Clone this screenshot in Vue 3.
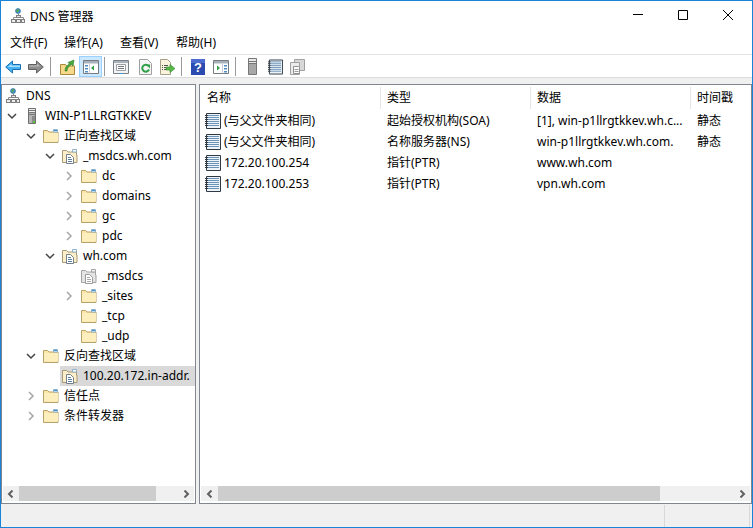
<script setup>
const menus = ['文件(F)', '操作(A)', '查看(V)', '帮助(H)']

const tree = [
  { label: 'DNS', level: 0, icon: 'dns', arrow: '' },
  { label: 'WIN-P1LLRGTKKEV', level: 1, icon: 'server', arrow: 'open' },
  { label: '正向查找区域', level: 2, icon: 'folder', arrow: 'open' },
  { label: '_msdcs.wh.com', level: 3, icon: 'zone', arrow: 'open' },
  { label: 'dc', level: 4, icon: 'folder', arrow: 'closed' },
  { label: 'domains', level: 4, icon: 'folder', arrow: 'closed' },
  { label: 'gc', level: 4, icon: 'folder', arrow: 'closed' },
  { label: 'pdc', level: 4, icon: 'folder', arrow: 'closed' },
  { label: 'wh.com', level: 3, icon: 'zone', arrow: 'open' },
  { label: '_msdcs', level: 4, icon: 'zonegray', arrow: '' },
  { label: '_sites', level: 4, icon: 'folder', arrow: 'closed' },
  { label: '_tcp', level: 4, icon: 'folder', arrow: '' },
  { label: '_udp', level: 4, icon: 'folder', arrow: '' },
  { label: '反向查找区域', level: 2, icon: 'folder', arrow: 'open' },
  { label: '100.20.172.in-addr.', level: 3, icon: 'zone', arrow: '', selected: true },
  { label: '信任点', level: 2, icon: 'folder', arrow: 'closed' },
  { label: '条件转发器', level: 2, icon: 'folder', arrow: 'closed' }
]

const columns = [
  { label: '名称', cls: 'c1' },
  { label: '类型', cls: 'c2' },
  { label: '数据', cls: 'c3' },
  { label: '时间戳', cls: 'c4' }
]

const rows = [
  { name: '(与父文件夹相同)', type: '起始授权机构(SOA)', data: '[1], win-p1llrgtkkev.wh.c...', time: '静态' },
  { name: '(与父文件夹相同)', type: '名称服务器(NS)', data: 'win-p1llrgtkkev.wh.com.', time: '静态' },
  { name: '172.20.100.254', type: '指针(PTR)', data: 'www.wh.com', time: '' },
  { name: '172.20.100.253', type: '指针(PTR)', data: 'vpn.wh.com', time: '' }
]
</script>

<template>
  <div class="window">
    <svg class="defs" width="0" height="0" aria-hidden="true">
      <symbol id="dns" viewBox="0 0 16 16">
        <circle cx="8" cy="3" r="2.500" fill="#3f8fce" stroke="#2c6a9c" stroke-width=".6" />
        <path d="M6.500 2l2-1 1 1.500-1.500 1-.5 1.500-1-1.500z" fill="#58a84a" />
        <path d="M8.500 6v3M3.500 11.500V9.500h10v2" fill="none" stroke="#8a8a8a" />
        <rect x="6.500" y="7.500" width="4" height="2" fill="#e4e4e4" stroke="#808080" />
        <rect x="1.500" y="11.500" width="4" height="3" fill="#ececec" stroke="#808080" />
        <rect x="6.500" y="11.500" width="4" height="3" fill="#ececec" stroke="#808080" />
        <rect x="11.500" y="11.500" width="3" height="3" fill="#ececec" stroke="#808080" />
      </symbol>
      <symbol id="server" viewBox="0 0 16 16">
        <path d="M4.500.5h7v15h-7z" fill="#b4b4b4" stroke="#6f6f6f" />
        <path d="M5 1h6v4H5z" fill="#f0f0f0" />
        <path d="M5 2.500h6M5 4.500h6M5 6.500h6" stroke="#777" />
        <path d="M8 8h3v7H8z" fill="#8b8b8b" />
        <rect x="9" y="13" width="2" height="2" fill="#5fc23c" />
      </symbol>
      <symbol id="folder" viewBox="0 0 16 16">
        <path d="M.5 14.500V2.500h4l1.500 1.500h9v10.500z" fill="#fbe5a8" stroke="#b7a26a" />
        <path d="M1 13.500V5h14v8.500z" fill="#fdeebe" />
        <path d="M10.500 1.500h4V4h-4z" fill="#fff" stroke="#8fb2cc" />
        <path d="M11 2.500h3" stroke="#3d94d6" />
      </symbol>
      <symbol id="zone" viewBox="0 0 16 16">
        <path d="M.5 14.500V2.500h4l1.500 1.500h8.500v3h.5v7.500z" fill="#fbeec8" stroke="#a79a76" />
        <path d="M10.500 1.500h4V4h-4z" fill="#fff" stroke="#8fb2cc" />
        <path d="M4.500 6.500h4l3 3v6h-7z" fill="#fff" stroke="#74808c" />
        <path d="M6 9.500h3M6 11.500h4M6 13.500h4" stroke="#5f7f9c" />
      </symbol>
      <symbol id="zonegray" viewBox="0 0 16 16">
        <path d="M.5 14.500V2.500h4l1.500 1.500h8.500v3h.5v7.500z" fill="#e4e4e4" stroke="#a4a4a4" />
        <path d="M10.500 1.500h4V4h-4z" fill="#f4f4f4" stroke="#a4a4a4" />
        <path d="M4.500 6.500h4l3 3v6h-7z" fill="#fff" stroke="#9a9a9a" />
        <path d="M6 9.500h3M6 11.500h4M6 13.500h4" stroke="#a8a8a8" />
      </symbol>
      <symbol id="record" viewBox="0 0 16 16">
        <path d="M1.500.5h14v15h-14z" fill="#eef3f8" stroke="#2f3a44" />
        <path d="M3 2.500h11M3 4.500h11M3 6.500h11M3 8.500h11M3 10.500h11M3 12.500h11" stroke="#6b93b8" />
        <path d="M0 2.500h3M0 4.500h3M0 6.500h3M0 8.500h3M0 10.500h3M0 12.500h3" stroke="#2f3a44" />
      </symbol>
      <symbol id="open" viewBox="0 0 10 10">
        <path d="M1 3l4 4 4-4" fill="none" stroke="#444" stroke-width="1.500" />
      </symbol>
      <symbol id="closed" viewBox="0 0 10 10">
        <path d="M3 1l4 4-4 4" fill="none" stroke="#a6a6a6" stroke-width="1.500" />
      </symbol>
      <symbol id="sleft" viewBox="0 0 8 8">
        <path d="M5.500.5L2 4l3.500 3.500" fill="none" stroke="#606060" stroke-width="2" />
      </symbol>
      <symbol id="sright" viewBox="0 0 8 8">
        <path d="M2.500.5L6 4 2.500 7.500" fill="none" stroke="#606060" stroke-width="2" />
      </symbol>
    </svg>

    <header class="titlebar">
      <svg class="app-icon" width="16" height="16"><use href="#dns" /></svg>
      <span class="title">DNS 管理器</span>
      <div class="controls">
        <svg width="12" height="12" viewBox="0 0 12 12"><path d="M1 5.500h10" stroke="#000" fill="none" /></svg>
        <svg width="12" height="12" viewBox="0 0 12 12"><path d="M1.500 1.500h9v9h-9z" stroke="#000" fill="none" /></svg>
        <svg width="12" height="12" viewBox="0 0 12 12"><path d="M1 1l10 10M11 1L1 11" stroke="#000" fill="none" /></svg>
      </div>
    </header>

    <nav class="menubar">
      <span v-for="m in menus" :key="m" class="menu">{{ m }}</span>
    </nav>

    <div class="toolbar">
      <svg class="tb t-back" width="16" height="14" viewBox="0 0 16 14">
        <path d="M.7 7l6.800-6v3.500h8v5h-8V13z" fill="#45b0f2" stroke="#1a70b8" />
        <path d="M3 7l3.500-3v1.500H15V7z" fill="#a9e0fb" />
      </svg>
      <svg class="tb t-fwd" width="16" height="14" viewBox="0 0 16 14">
        <path d="M15.300 7L8.500 1v3.500h-8v5h8V13z" fill="#8c8c8c" stroke="#5e5e5e" />
        <path d="M1 5.500h8V3.500l3 3H1z" fill="#bdbdbd" />
      </svg>
      <i class="sep s1"></i>
      <svg class="tb t-up" width="16" height="16" viewBox="0 0 16 16">
        <path d="M.5 15.500v-10h5l1 1.500h8v8.500z" fill="#f7d98c" stroke="#a98a3d" />
        <path d="M5 12c0-4 2-6 4.500-7L8 3.500l6-2.500-1 6-1.500-1.500C9 7 7 9 7 12z" fill="#49a93a" stroke="#2d7a28" stroke-width=".6" />
      </svg>
      <button class="active-btn" type="button">
        <svg width="16" height="14" viewBox="0 0 16 14">
          <path d="M.5.5h15v13H.5z" fill="#fff" stroke="#757b82" />
          <path d="M1 1h14v2.500H1z" fill="#a9b2bb" />
          <path d="M2 5h3v1.500H2zM2 8h3v1.500H2zM2 11h3v1.500H2z" fill="#4d8dc4" />
          <path d="M11 5.500v5L8 8z" fill="#2f9e44" />
          <path d="M6.500 3.500v10" stroke="#c9ced4" />
        </svg>
      </button>
      <i class="sep s2"></i>
      <svg class="tb t-prop" width="16" height="16" viewBox="0 0 16 16">
        <path d="M.5 1.500h15v13H.5z" fill="#f4f4f4" stroke="#7a7f86" />
        <path d="M1 2h14v2H1z" fill="#a9b2bb" />
        <path d="M3.500 5.500h9v6h-9z" fill="#fff" stroke="#9aa0a6" />
        <path d="M5 7.500h6M5 9.500h6" stroke="#777" />
        <path d="M6 14.500h4" stroke="#3d94d6" />
      </svg>
      <svg class="tb t-refresh" width="15" height="16" viewBox="0 0 15 16">
        <path d="M1.500.5h8l4 4v11h-12z" fill="#f6f6f6" stroke="#a0a0a0" />
        <path d="M10.500 7a3.500 3.500 0 1 0 .5 3.500" fill="none" stroke="#2f9e44" stroke-width="2" />
        <path d="M8 5.500h4v4z" fill="#2f9e44" />
      </svg>
      <svg class="tb t-export" width="17" height="16" viewBox="0 0 17 16">
        <path d="M1.500.5h7l3 3v12h-10z" fill="#fbf3dc" stroke="#a6a08a" />
        <path d="M3 6.500h1M3 8.500h1M3 10.500h1M5 6.500h4M5 8.500h3M5 10.500h3" stroke="#555" />
        <path d="M7 8h4V5.500l5 4-5 4V11H7z" fill="#58b848" stroke="#2d8a2b" stroke-width=".6" />
      </svg>
      <i class="sep s3"></i>
      <svg class="tb t-help" width="14" height="16" viewBox="0 0 14 16">
        <rect width="14" height="16" fill="#2b4bb0" />
        <path d="M0 0h14v4H0z" fill="#4c6cd0" />
        <text x="7" y="13" text-anchor="middle" class="help-mark">?</text>
      </svg>
      <svg class="tb t-pane" width="16" height="14" viewBox="0 0 16 14">
        <path d="M.5.500h15v13H.5z" fill="#fff" stroke="#757b82" />
        <path d="M1 1h14v2.500H1z" fill="#a9b2bb" />
        <path d="M11 5h3v1.500h-3zM11 8h3v1.500h-3zM11 11h3v1.500h-3z" fill="#4d8dc4" />
        <path d="M4 5.500v5L7 8z" fill="#2f9e44" />
        <path d="M9.500 3.500v10" stroke="#c9ced4" />
      </svg>
      <i class="sep s4"></i>
      <svg class="tb t-server" width="9" height="17" viewBox="0 0 9 17">
        <path d="M.5.500h8v16h-8z" fill="#a8a8a8" stroke="#777" />
        <path d="M1 1h7v5H1z" fill="#e8e8e8" />
        <path d="M1 3.500h7M1 5.500h7" stroke="#777" />
      </svg>
      <svg class="tb t-book" width="15" height="16"><use href="#record" /></svg>
      <svg class="tb t-copy" width="15" height="16" viewBox="0 0 15 16">
        <path d="M4.500.5h10v11h-10z" fill="#d8d8d8" stroke="#a0a0a0" />
        <path d="M.5 3.500h9v12h-9z" fill="#ececec" stroke="#a0a0a0" />
        <path d="M3.500 7.500h5l1 1v6h-6z" fill="#fff" stroke="#8f8f8f" />
        <path d="M4.500 10.500h4M4.500 12.500h4" stroke="#9a9a9a" />
      </svg>
    </div>

    <main class="workspace">
      <section class="pane tree-pane">
        <ul class="tree">
          <li v-for="(n, i) in tree" :key="i" class="node" :class="'lv' + n.level">
            <span class="arrow">
              <svg v-if="n.arrow" width="10" height="10"><use :href="'#' + n.arrow" /></svg>
            </span>
            <span class="node-body" :class="{ selected: n.selected }">
              <svg class="node-icon" width="16" height="16"><use :href="'#' + n.icon" /></svg>
              <span class="node-label">{{ n.label }}</span>
            </span>
          </li>
        </ul>
        <div class="hscroll">
          <span class="sbtn"><svg width="8" height="8"><use href="#sleft" /></svg></span>
          <span class="track"><i class="thumb thumb-tree"></i></span>
          <span class="sbtn"><svg width="8" height="8"><use href="#sright" /></svg></span>
        </div>
      </section>

      <section class="pane list-pane">
        <div class="list-head">
          <span v-for="c in columns" :key="c.label" class="col-head" :class="c.cls">{{ c.label }}</span>
        </div>
        <div class="list-body">
          <div v-for="(r, i) in rows" :key="i" class="row">
            <span class="cell c1">
              <svg class="rec-icon" width="16" height="16"><use href="#record" /></svg>{{ r.name }}
            </span>
            <span class="cell c2">{{ r.type }}</span>
            <span class="cell c3">{{ r.data }}</span>
            <span class="cell c4">{{ r.time }}</span>
          </div>
        </div>
        <div class="hscroll">
          <span class="sbtn"><svg width="8" height="8"><use href="#sleft" /></svg></span>
          <span class="track"><i class="thumb thumb-list"></i></span>
          <span class="sbtn"><svg width="8" height="8"><use href="#sright" /></svg></span>
        </div>
      </section>
    </main>

    <footer class="statusbar">
      <i class="st-cell st-b"></i>
      <i class="st-cell st-a"></i>
    </footer>
  </div>
</template>

<style>
html, body { margin: 0; background: #fff; }
</style>

<style scoped>
.window {
  width: 753px;
  height: 528px;
  box-sizing: border-box;
  border: 1px solid #1883d7;
  display: flex;
  flex-direction: column;
  overflow: hidden;
  background: #fff;
  color: #000;
  font-family: "Noto Sans", "Noto Sans CJK SC", sans-serif;
  font-size: 12px;
  line-height: 16px;
}
.defs { position: absolute; }
.titlebar {
  height: 30px;
  flex: none;
  display: flex;
  align-items: center;
  padding: 0 0 0 9px;
}
.app-icon { margin-right: 4px; }
.title { flex: 1; margin-top: 1px; }
.controls {
  display: flex;
  align-items: center;
  gap: 33px;
  padding-right: 12px;
  margin-right: 6px;
  margin-bottom: 2px;
}
.menubar {
  height: 22px;
  padding-top: 1px;
  flex: none;
  display: flex;
  align-items: center;
  padding-left: 9px;
  border-bottom: 1px solid #e4e4e4;
}
.menu { width: 56px; }
.menu:first-child { width: 54px; }
.toolbar {
  height: 21px;
  padding-top: 1px;
  padding-left: 4px;
  flex: none;
  display: flex;
  align-items: center;
  border-bottom: 1px solid #dcdcdc;
}
.tb { flex: none; display: block; }
.t-fwd { margin-left: 7px; }
.sep { flex: none; width: 1px; height: 19px; background: #9a9a9a; }
.s1 { margin-left: 6px; }
.t-up { margin-left: 9px; }
.active-btn {
  flex: none;
  width: 23px;
  height: 21px;
  margin-left: 3px;
  padding: 0;
  box-sizing: border-box;
  background: #cce8ff;
  border: 1px solid #99d1ff;
  display: flex;
  align-items: center;
  justify-content: center;
}
.s2 { margin-left: 2px; }
.t-prop { margin-left: 8px; }
.t-refresh { margin-left: 9px; }
.t-export { margin-left: 6px; }
.s3 { margin-left: 5px; }
.help-mark { font: bold 13px "Liberation Sans", sans-serif; fill: #fff; }
.t-help { margin-left: 9px; }
.t-pane { margin-left: 8px; }
.s4 { margin-left: 6px; }
.t-server { margin-left: 12px; }
.t-book { margin-left: 11px; }
.t-copy { margin-left: 7px; }
.workspace {
  flex: 1;
  min-height: 0;
  display: flex;
  background: #f0f0f0;
  padding: 6px 0 0 0;
}
.pane {
  box-sizing: border-box;
  border: 1px solid #82878f;
  background: #fff;
  display: flex;
  flex-direction: column;
  min-width: 0;
}
.tree-pane { width: 195px; flex: none; }
.list-pane { flex: 1; margin-left: 3px; }
.tree {
  flex: 1;
  margin: 0;
  padding: 1px 0 0;
  list-style: none;
  overflow: hidden;
}
.node {
  height: 20px;
  display: flex;
  align-items: center;
}
.arrow {
  flex: none;
  width: 10px;
  height: 10px;
  display: flex;
  margin-right: 5px;
}
.lv0 .arrow { width: 0; margin-right: 1px; }
.lv1 { padding-left: 5px; }
.lv2 { padding-left: 24px; }
.lv3 { padding-left: 43px; }
.lv4 { padding-left: 62px; }
.node-body {
  flex: 1;
  min-width: 0;
  height: 20px;
  display: flex;
  align-items: center;
  padding-left: 2px;
  white-space: nowrap;
  overflow: hidden;
}
.node-body.selected { background: #d9d9d9; }
.node-icon { flex: none; margin-right: 5px; }
.hscroll {
  flex: none;
  height: 15px;
  margin: 0 1px 2px;
  display: flex;
  background: #f0f0f0;
}
.sbtn {
  flex: none;
  width: 17px;
  display: flex;
  align-items: center;
  justify-content: center;
}
.tree-pane .sbtn:first-child { width: 16px; }
.track { flex: 1; display: flex; }
.thumb { display: block; background: #cdcdcd; }
.thumb-tree { width: 137px; }
.thumb-list { width: 442px; }
.list-head {
  flex: none;
  height: 24px;
  display: flex;
  align-items: stretch;
}
.col-head {
  display: flex;
  align-items: center;
  box-sizing: border-box;
  padding-left: 6px;
  border-right: 1px solid #e5e5e5;
  margin: 2px 0 0;
  flex: none;
}
.col-head.c1 { padding-left: 7px; }
.col-head.c4 { border-right: 0; }
.c1 { width: 181px; }
.c2 { width: 150px; }
.c3 { width: 160px; }
.c4 { width: 60px; }
.list-body { flex: 1; min-height: 0; padding-top: 1px; }
.row {
  height: 21px;
  display: flex;
  align-items: center;
}
.cell {
  flex: none;
  box-sizing: border-box;
  padding-left: 6px;
  white-space: nowrap;
  overflow: hidden;
  display: flex;
  align-items: center;
}
.cell.c1 { padding-left: 5px; }
.rec-icon { flex: none; margin-right: 3px; }
.statusbar {
  height: 22px;
  flex: none;
  background: #f0f0f0;
  display: flex;
  justify-content: flex-end;
  padding: 1px 2px 0 0;
}
.st-cell { display: block; border-right: 1px solid #d8d8d8; }
.st-a { width: 84px; }
.st-b { width: 1px; }
</style>
